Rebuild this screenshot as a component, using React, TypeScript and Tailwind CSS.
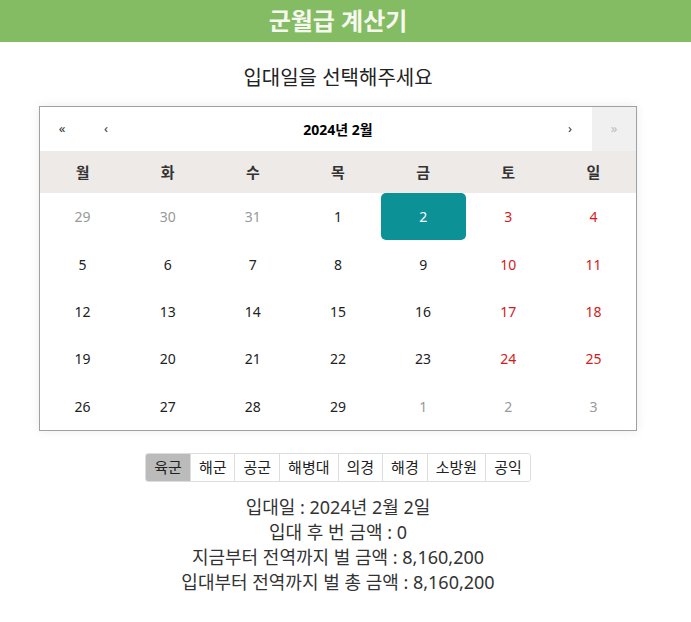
import { useState } from "react";

const weekdays = ["월", "화", "수", "목", "금", "토", "일"];
const branches = ["육군", "해군", "공군", "해병대", "의경", "해경", "소방원", "공익"];

type Day = { n: number; other: boolean; weekend: boolean };

function buildDays(): Day[] {
  const days: Day[] = [];
  [29, 30, 31].forEach((n) => days.push({ n, other: true, weekend: false }));
  for (let n = 1; n <= 29; n++) {
    const col = (n + 2) % 7; // 1 Feb 2024 is a Thursday
    days.push({ n, other: false, weekend: col === 5 || col === 6 });
  }
  [1, 2, 3].forEach((n) => days.push({ n, other: true, weekend: false }));
  return days;
}

export default function App() {
  const [branch, setBranch] = useState("육군");
  const [selected, setSelected] = useState(2);
  const days = buildDays();

  return (
    <div className="min-h-screen bg-white font-['Noto_Sans','Noto_Sans_CJK_KR',sans-serif] text-[#222]">
      <header className="flex h-[42px] items-center bg-[#84bc63]">
        <h1 className="w-[676px] text-center text-[24px] font-bold leading-none text-[#f6f8ef]">군월급 계산기</h1>
      </header>

      <main className="flex w-[676px] flex-col items-center">
        <h2 className="mt-[22px] text-[20px] leading-[28px] text-[#222]">입대일을 선택해주세요</h2>

        <div className="mt-[14px] w-[598px] border border-[#a0a0a0] bg-white shadow-[0_0_10px_rgba(0,0,0,0.08)]">
          <div className="flex h-[44px] items-center text-[13px]">
            <button className="h-full w-[44px] text-[#333]">«</button>
            <button className="h-full w-[44px] text-[#333]">‹</button>
            <span className="flex-1 text-center text-[14px] font-bold text-black">2024년 2월</span>
            <button className="h-full w-[44px] text-[#333]">›</button>
            <button className="h-full w-[44px] bg-[#f0f0f0] text-[#bbb]">»</button>
          </div>
          <div className="grid h-[42px] grid-cols-7 items-center bg-[#eeeae8] text-[15px] font-bold text-[#333]">
            {weekdays.map((w) => (
              <div key={w} className="text-center">
                {w}
              </div>
            ))}
          </div>
          <div className="grid grid-cols-7">
            {days.map((d, i) => {
              const active = !d.other && d.n === selected;
              return (
                <button
                  key={i}
                  onClick={() => !d.other && setSelected(d.n)}
                  className={
                    "flex h-[47.4px] items-center justify-center rounded-[5px] text-[14px] " +
                    (active
                      ? "bg-[#0b9196] text-white"
                      : d.other
                        ? "text-[#999]"
                        : d.weekend
                          ? "text-[#d21b1b]"
                          : "text-[#222]")
                  }
                >
                  {d.n}
                </button>
              );
            })}
          </div>
        </div>

        <div className="mt-[22px] flex overflow-hidden rounded-[3px] border border-[#ddd] text-[15px] text-[#222]">
          {branches.map((b, i) => (
            <button
              key={b}
              onClick={() => setBranch(b)}
              className={
                "h-[27px] px-[8px] leading-[27px] " +
                (i > 0 ? "border-l border-[#ddd] " : "") +
                (branch === b ? "bg-[#bbb]" : "bg-white")
              }
            >
              {b}
            </button>
          ))}
        </div>

        <div className="mt-[13px] flex flex-col items-center text-[18px] leading-[25px] text-[#333]">
          <p>입대일 : 2024년 2월 {selected}일</p>
          <p>입대 후 번 금액 : 0</p>
          <p>지금부터 전역까지 벌 금액 : 8,160,200</p>
          <p>입대부터 전역까지 벌 총 금액 : 8,160,200</p>
        </div>
      </main>
    </div>
  );
}
